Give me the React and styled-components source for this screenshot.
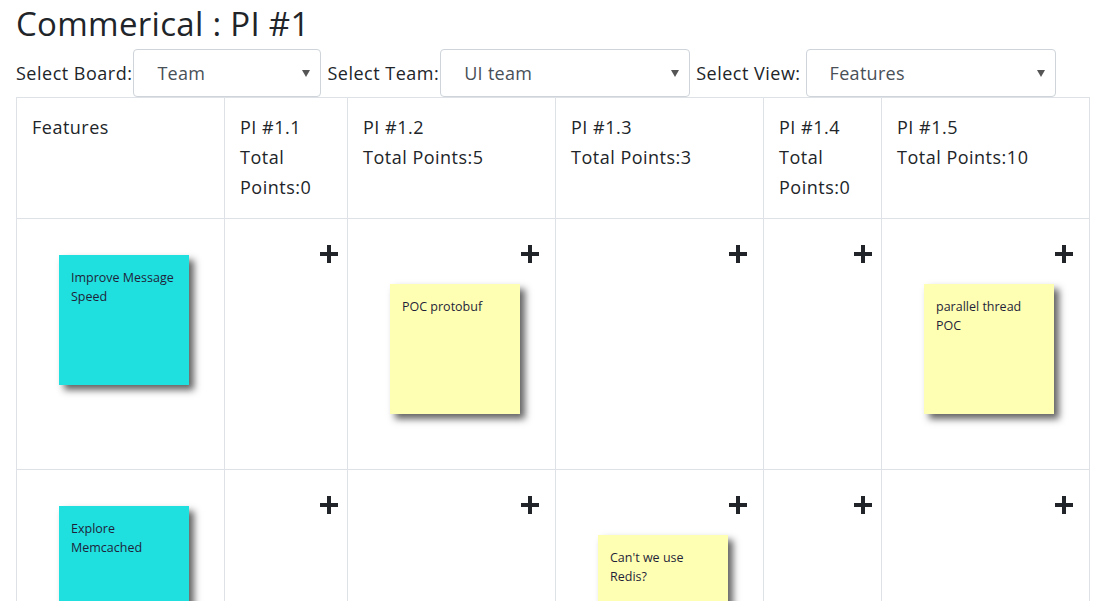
import React from 'react';
import styled, { createGlobalStyle } from 'styled-components';

const GlobalStyle = createGlobalStyle`
    body {
        margin: 0;
        background: #fff;
        color: #212529;
        font-family: "Open Sans", "Noto Sans", sans-serif;
    }
`

const Page = styled.div`
    padding: 0 15px 0 16px;
`
const Title = styled.h2`
    margin: 0;
    padding-top: 2px;
    font-size: 33px;
    font-weight: 400;
    letter-spacing: 0.3px;
    line-height: 44px;
`
const Filters = styled.div`
    display: flex;
    align-items: center;
    height: 48px;
    margin-top: 3px;
`
const Label = styled.span`
    font-size: 18px;
    letter-spacing: 0.5px;
    margin-right: ${props => props.gap || 0}px;
`
const SelectBox = styled.div`
    box-sizing: border-box;
    width: ${props => props.width}px;
    height: 48px;
    display: flex;
    align-items: center;
    justify-content: space-between;
    padding: 0 10px 0 23px;
    margin-right: 6px;
    border: 1px solid #ced4da;
    border-radius: 4px;
    font-size: 18px;
    letter-spacing: 0.3px;
    color: #495057;
`
const Arrow = styled.span`
    width: 0;
    height: 0;
    border-left: 4px solid transparent;
    border-right: 4px solid transparent;
    border-top: 7px solid #555;
`
const Table = styled.table`
    width: 1073px;
    border-collapse: collapse;
    table-layout: fixed;
`
const HeadCell = styled.th`
    width: ${props => props.width}px;
    box-sizing: border-box;
    border: 1px solid #dee2e6;
    padding: 14px 15px 16px;
    height: 120px;
    text-align: left;
    vertical-align: top;
    font-weight: 400;
    font-size: 18px;
    letter-spacing: 0.5px;
    line-height: 30px;
`
const Cell = styled.td`
    border: 1px solid #dee2e6;
    padding: 15px 15px 0;
    height: 251px;
    box-sizing: border-box;
    vertical-align: top;
`
const PlusRow = styled.div`
    display: flex;
    justify-content: flex-end;
    height: 29px;
    padding-top: 11px;
    box-sizing: border-box;
    margin-right: ${props => props.narrow ? -6 : 1}px;
`
const Note = styled.div`
    width: 130px;
    height: 130px;
    box-sizing: border-box;
    margin: 21px 0 0 27px;
    padding: 13px 12px;
    background: ${props => props.color === 'cyan' ? '#20dfdf' : '#ffffb3'};
    box-shadow: 5px 5px 7px rgba(33, 33, 33, 0.7);
    font-family: "Open Sans", "Noto Sans", sans-serif;
    font-size: 12.5px;
    line-height: 19px;
    color: #1f1f3a;
`

const Plus = () => (
    <svg width="18" height="18" viewBox="0 0 18 18">
        <rect x="7" y="0" width="4" height="18" fill="#212529" />
        <rect x="0" y="7" width="18" height="4" fill="#212529" />
    </svg>
)

const columns = [
    { name: 'PI #1.1', points: 0, width: 123, narrow: true },
    { name: 'PI #1.2', points: 5, width: 208 },
    { name: 'PI #1.3', points: 3, width: 208 },
    { name: 'PI #1.4', points: 0, width: 118, narrow: true },
    { name: 'PI #1.5', points: 10, width: 208 },
]

const rows = [
    { feature: 'Improve Message Speed', notes: { 'PI #1.2': 'POC protobuf', 'PI #1.5': 'parallel thread POC' } },
    { feature: 'Explore Memcached', notes: { 'PI #1.3': "Can't we use Redis?" } },
]

const App = () => {
    return (
        <Page>
            <GlobalStyle />
            <Title>Commerical : PI #1</Title>
            <Filters>
                <Label gap={1}>Select Board:</Label>
                <SelectBox width={188}>Team<Arrow /></SelectBox>
                <Label gap={1}>Select Team:</Label>
                <SelectBox width={250}>UI team<Arrow /></SelectBox>
                <Label gap={5}>Select View:</Label>
                <SelectBox width={250}>Features<Arrow /></SelectBox>
            </Filters>
            <Table>
                <thead>
                    <tr>
                        <HeadCell width={208}>Features</HeadCell>
                        {columns.map(col => (
                            <HeadCell key={col.name} width={col.width}>
                                {col.name}<br />Total Points:{col.points}
                            </HeadCell>
                        ))}
                    </tr>
                </thead>
                <tbody>
                    {rows.map(row => (
                        <tr key={row.feature}>
                            <Cell>
                                <Note color='cyan'>{row.feature}</Note>
                            </Cell>
                            {columns.map(col => (
                                <Cell key={col.name}>
                                    <PlusRow narrow={col.narrow}><Plus /></PlusRow>
                                    {row.notes[col.name] && <Note>{row.notes[col.name]}</Note>}
                                </Cell>
                            ))}
                        </tr>
                    ))}
                </tbody>
            </Table>
        </Page>
    )
};

export default App;
